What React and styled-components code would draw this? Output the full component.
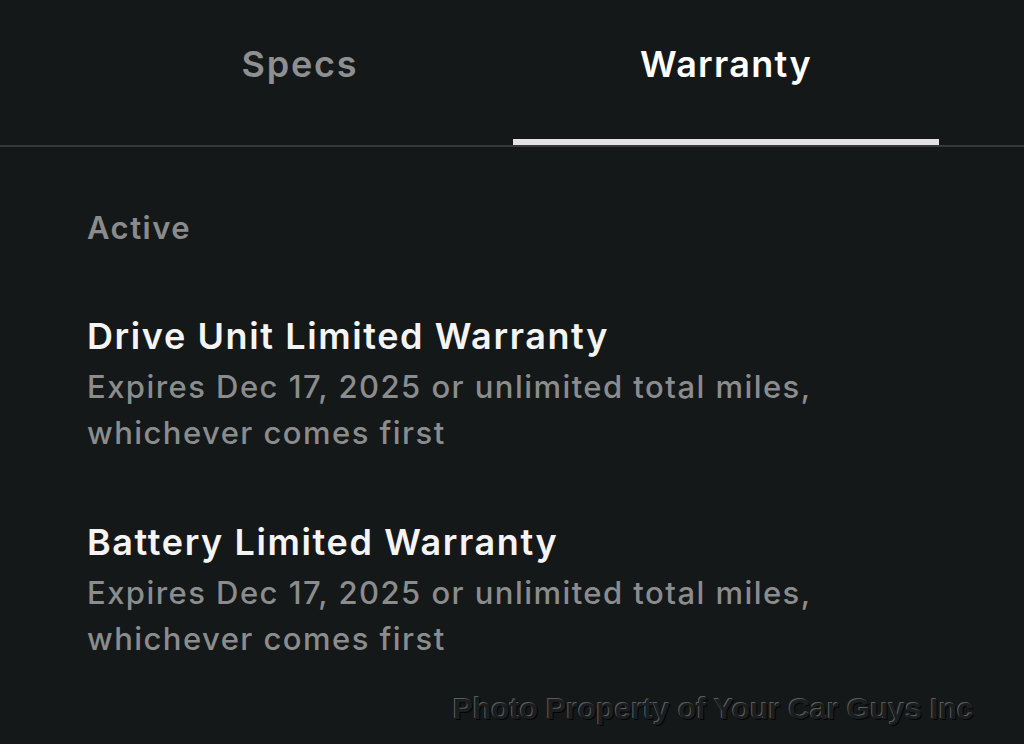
import React, { useState } from 'react';
import styled, { createGlobalStyle } from 'styled-components';

const warranties = [
  {
    id: 'drive',
    title: 'Drive Unit Limited Warranty',
    lines: ['Expires Dec 17, 2025 or unlimited total miles,', 'whichever comes first'],
  },
  {
    id: 'battery',
    title: 'Battery Limited Warranty',
    lines: ['Expires Dec 17, 2025 or unlimited total miles,', 'whichever comes first'],
  },
];

const App = () => {
  const [tab, setTab] = useState('warranty');

  return (
    <>
      <GlobalStyle />
      <Page>
        <TabBar>
          <Tab $active={tab === 'specs'} onClick={() => setTab('specs')}>Specs</Tab>
          <Tab $active={tab === 'warranty'} onClick={() => setTab('warranty')}>Warranty</Tab>
        </TabBar>
        <Content>
          <SectionLabel>Active</SectionLabel>
          <List>
            {warranties.map((item) => (
              <Item key={item.id}>
                <ItemTitle>{item.title}</ItemTitle>
                <ItemText>
                  {item.lines.map((line) => (
                    <span key={line}>{line}</span>
                  ))}
                </ItemText>
              </Item>
            ))}
          </List>
        </Content>
        <Watermark>Photo Property of Your Car Guys Inc</Watermark>
      </Page>
    </>
  );
};

export default App;

const GlobalStyle = createGlobalStyle`
  html, body {
    margin: 0;
    padding: 0;
    background: #151819;
  }
  body {
    font-family: Inter, "Noto Sans", sans-serif;
  }
`;

const Page = styled.div`
  position: relative;
  width: 1024px;
  height: 744px;
  overflow: hidden;
  background: #151819;
`;

const TabBar = styled.div`
  display: flex;
  padding: 0 85px 0 87px;
  border-bottom: 2px solid #363839;
`;

const Tab = styled.div`
  flex: 1;
  height: 145px;
  box-sizing: border-box;
  padding-top: 42px;
  text-align: center;
  font-size: 36px;
  font-weight: 600;
  line-height: normal;
  letter-spacing: ${({ $active }) => ($active ? '1.3px' : '1.8px')};
  color: ${({ $active }) => ($active ? '#ffffff' : '#8e8f90')};
  border-bottom: 6px solid ${({ $active }) => ($active ? '#e2e2e2' : 'transparent')};
  cursor: pointer;
`;

const Content = styled.div`
  padding: 59px 87px 0;
`;

const SectionLabel = styled.div`
  font-size: 31px;
  font-weight: 600;
  letter-spacing: 1.5px;
  color: #8a8b8c;
  line-height: 44px;
`;

const List = styled.div`
  display: flex;
  flex-direction: column;
  gap: 61px;
  margin-top: 61px;
`;

const Item = styled.div`
  display: flex;
  flex-direction: column;
  gap: 3px;
`;

const ItemTitle = styled.div`
  font-size: 36px;
  font-weight: 600;
  letter-spacing: 1.6px;
  color: #f4f4f4;
  line-height: 50px;
`;

const ItemText = styled.div`
  display: flex;
  flex-direction: column;
  font-size: 31px;
  font-weight: 500;
  letter-spacing: 1.45px;
  color: #8b8c8d;
  line-height: 46px;
`;

const Watermark = styled.div`
  position: absolute;
  left: 453px;
  top: 692px;
  font-family: "Liberation Sans", Arial, sans-serif;
  font-size: 30px;
  font-weight: 700;
  color: #1b1e20;
  text-shadow: -1px -1px 0 #5a5c5e, 1px 1px 0 #050505;
  white-space: nowrap;
`;
